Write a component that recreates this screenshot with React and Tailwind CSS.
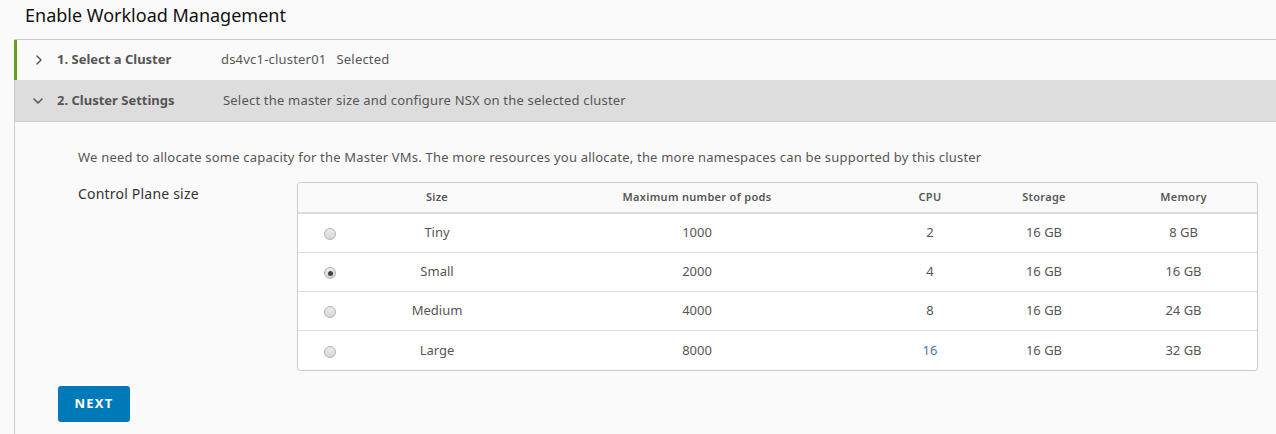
import { ChevronRight, ChevronDown } from 'lucide-react'

const rows = [
    { size: 'Tiny', pods: '1000', cpu: '2', storage: '16 GB', memory: '8 GB' },
    { size: 'Small', pods: '2000', cpu: '4', storage: '16 GB', memory: '16 GB', selected: true },
    { size: 'Medium', pods: '4000', cpu: '8', storage: '16 GB', memory: '24 GB' },
    { size: 'Large', pods: '8000', cpu: '16', storage: '16 GB', memory: '32 GB', blue: true },
]

function Radio({ checked }) {
    return (
        <span className="flex h-[12px] w-[12px] items-center justify-center rounded-full border border-[#b3b3b3] bg-gradient-to-b from-[#ececec] to-[#d6d6d6]">
            {checked && <span className="h-[5px] w-[5px] rounded-full bg-[#444]" />}
        </span>
    )
}

export default function App() {
    return (
        <div className="h-[434px] w-[1276px] overflow-hidden bg-[#fafafa] font-['Noto_Sans',sans-serif] text-[#565656]">
            <h1 className="h-[39px] pl-[25px] pt-[3px] text-[18px] leading-[24px] text-[#111]">Enable Workload Management</h1>

            <div className="ml-[14px] h-[395px] border-l border-t border-[#cccccc]">
                <div className="flex h-[40px] items-center border-l-[3px] border-[#62a420] -ml-px text-[13px] tracking-[0.2px]">
                    <ChevronRight className="ml-[14px] h-[16px] w-[16px] text-[#555]" strokeWidth={2.2} />
                    <span className="ml-[10px] w-[164px] font-bold tracking-normal text-[#555]">1. Select a Cluster</span>
                    <span>ds4vc1-cluster01</span>
                    <span className="ml-[10px]">Selected</span>
                </div>

                <div className="flex h-[42px] items-center border-b border-[#cccccc] bg-[#dddddd] text-[13px] tracking-[0.2px]">
                    <ChevronDown className="ml-[15px] h-[16px] w-[16px] text-[#555]" strokeWidth={2.2} />
                    <span className="ml-[11px] w-[166px] font-bold tracking-normal text-[#555]">2. Cluster Settings</span>
                    <span>Select the master size and configure NSX on the selected cluster</span>
                </div>

                <div className="pl-[63px] pt-[27px]">
                    <p className="text-[13px] leading-[17px] tracking-[0.2px]">
                        We need to allocate some capacity for the Master VMs. The more resources you allocate, the more namespaces can be supported by this cluster
                    </p>

                    <div className="mt-[16px] flex">
                        <div className="w-[219px] pt-[1px] text-[14px] tracking-[0.2px] text-[#333]">Control Plane size</div>
                        <table className="w-[961px] border-separate border-spacing-0 overflow-hidden rounded-[3px] border border-[#cccccc] bg-white text-[13px]">
                            <thead>
                                <tr className="h-[31px] bg-[#fafafa] text-[11px] tracking-[0.3px] text-[#565656]">
                                    <th className="w-[64px] border-b-2 border-[#dddddd]"></th>
                                    <th className="w-[150px] border-b-2 border-[#dddddd] font-semibold">Size</th>
                                    <th className="w-[370px] border-b-2 border-[#dddddd] font-semibold">Maximum number of pods</th>
                                    <th className="w-[96px] border-b-2 border-[#dddddd] font-semibold">CPU</th>
                                    <th className="w-[132px] border-b-2 border-[#dddddd] font-semibold">Storage</th>
                                    <th className="border-b-2 border-[#dddddd] font-semibold">Memory</th>
                                </tr>
                            </thead>
                            <tbody>
                                {rows.map((r, i) => (
                                    <tr key={r.size} className="h-[39px] text-center">
                                        <td className={i < rows.length - 1 ? 'border-b border-[#dddddd]' : ''}>
                                            <div className="flex justify-center pt-[2px]">
                                                <Radio checked={r.selected} />
                                            </div>
                                        </td>
                                        <td className={i < rows.length - 1 ? 'border-b border-[#dddddd]' : ''}>{r.size}</td>
                                        <td className={i < rows.length - 1 ? 'border-b border-[#dddddd]' : ''}>{r.pods}</td>
                                        <td className={(i < rows.length - 1 ? 'border-b border-[#dddddd] ' : '') + (r.blue ? 'text-[#4a78a8]' : '')}>{r.cpu}</td>
                                        <td className={i < rows.length - 1 ? 'border-b border-[#dddddd]' : ''}>{r.storage}</td>
                                        <td className={i < rows.length - 1 ? 'border-b border-[#dddddd]' : ''}>{r.memory}</td>
                                    </tr>
                                ))}
                            </tbody>
                        </table>
                    </div>

                    <button className="-ml-[20px] mt-[15px] h-[36px] w-[72px] rounded-[3px] bg-[#0079b8] text-[13px] font-bold tracking-[1.2px] text-white">
                        NEXT
                    </button>
                </div>
            </div>
        </div>
    )
}
